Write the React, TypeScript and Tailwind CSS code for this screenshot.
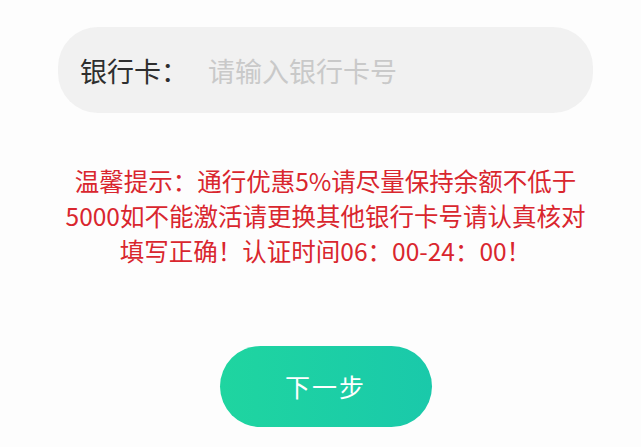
const cjk = '"Noto Sans CJK SC", "Noto Sans", sans-serif';

export default function App() {
  return (
    <div
      className="w-[641px] h-[447px] overflow-hidden bg-[#fdfdfd] flex flex-col items-center pl-[10px]"
      style={{ fontFamily: cjk }}
    >
      <div className="mt-[27px] w-[535px] h-[86px] rounded-[40px] bg-[#f1f1f1] flex items-center pl-[22px]">
        <span className="text-[27px] text-[#2e2e2e] leading-none">银行卡：</span>
        <input
          className="ml-[20px] flex-1 bg-transparent outline-none text-[27px] leading-none placeholder:text-[#c9c9c9]"
          placeholder="请输入银行卡号"
          style={{ fontFamily: cjk }}
        />
      </div>

      <div className="mt-[50px] text-center text-[24.5px] leading-[35px] text-[#d9262e]">
        <div>温馨提示：通行优惠5%请尽量保持余额不低于</div>
        <div>5000如不能激活请更换其他银行卡号请认真核对</div>
        <div>填写正确！认证时间06：00-24：00！</div>
      </div>

      <button className="mt-[78px] w-[212px] h-[81px] rounded-full bg-gradient-to-r from-[#1fd5a0] to-[#1ac9aa] text-white text-[25px] tracking-[2px]">
        下一步
      </button>
    </div>
  );
}
